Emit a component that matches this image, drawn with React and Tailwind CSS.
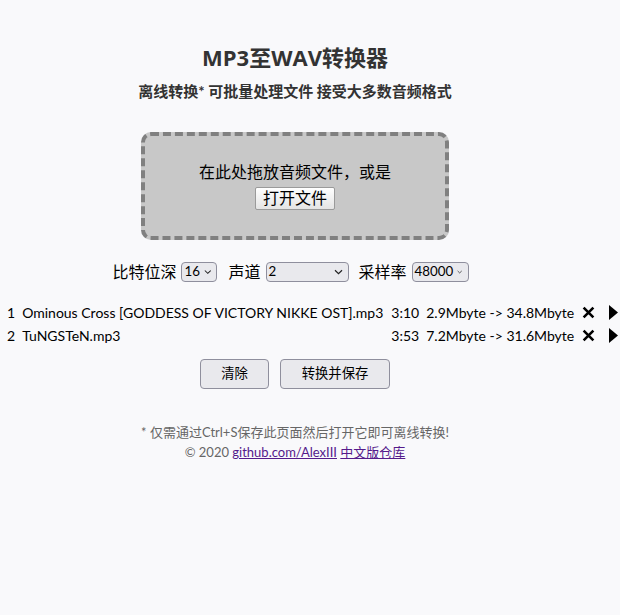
import React from "react";

const SANS = { fontFamily: "Lato, 'Noto Sans CJK SC', sans-serif" };

function Select({ value, w }) {
  return (
    <div
      className={`flex items-center justify-between h-[20px] rounded-[4px] border border-[#8f8f9d] bg-[#e9e9ed] pl-[2px] pr-[5px] text-[13.33px] text-black ${w}`}
    >
      <span className="leading-none">{value}</span>
      <svg width="9" height="6" viewBox="0 0 9 6" className="ml-[4px]">
        <path d="M1 1.2 L4.5 4.6 L8 1.2" fill="none" stroke="#222" strokeWidth="1.2" />
      </svg>
    </div>
  );
}

function Row({ idx, name, dur, size }) {
  return (
    <>
      <div className="pl-[7px] pr-[7px]">{idx}</div>
      <div className="whitespace-nowrap">{name}</div>
      <div className="pl-[8px] pr-[7px] whitespace-nowrap">{dur}</div>
      <div className="pr-[7px] whitespace-nowrap">{size}</div>
      <div className="flex items-center justify-center w-[14px]">
        <svg width="13" height="13" viewBox="0 0 12 12">
          <path d="M1.5 1.5 L10.5 10.5 M10.5 1.5 L1.5 10.5" stroke="#000" strokeWidth="2.4" />
        </svg>
      </div>
      <div className="flex items-center justify-end pr-[2px] pl-[4px]">
        <svg width="9" height="15" viewBox="0 0 9 15">
          <path d="M0 0 L9 7.5 L0 15 Z" fill="#000" />
        </svg>
      </div>
    </>
  );
}

export default function App() {
  return (
    <div className="w-[620px] min-h-[615px] bg-[#f9f9fb] text-[#222]" style={SANS}>
      <div className="w-[590px] flex flex-col items-center pt-[40px]">
        <h1
          className="text-[22px] font-bold text-[#333] leading-[34px]"
          style={{ fontFamily: "'Open Sans', 'Noto Sans CJK SC', sans-serif" }}
        >
          MP3至WAV转换器
        </h1>
        <div className="mt-[6px] text-[15px] font-bold text-[#333] leading-[22px]">
          离线转换* 可批量处理文件 接受大多数音频格式
        </div>
        <div className="mt-[30px] w-[308px] h-[108px] rounded-[10px] border-[4px] border-dashed border-[#808080] bg-[#c8c8c8] flex flex-col items-center justify-center text-[16px] text-black">
          <div className="leading-[22px] mt-[-2px]">在此处拖放音频文件，或是</div>
          <button className="mt-[4px] h-[23px] px-[7px] border border-[#9a9a9a] rounded-[2px] bg-gradient-to-b from-[#ffffff] to-[#e4e4e4] text-[16px] leading-[20px] text-black">
            打开文件
          </button>
        </div>
        <div className="mt-[20px] flex items-center text-[16px] text-black pr-[9px]">
          <span>比特位深</span>
          <span className="ml-[5px]"><Select value="16" w="w-[36px]" /></span>
          <span className="ml-[11px]">声道</span>
          <span className="ml-[5px]"><Select value="2" w="w-[83px]" /></span>
          <span className="ml-[10px]">采样率</span>
          <span className="ml-[5px]"><Select value="48000" w="w-[57px]" /></span>
        </div>
      </div>
      <div className="mt-[17px] grid grid-cols-[auto_auto_auto_auto_auto_1fr] items-center text-[14px] text-black leading-[23px]">
        <Row idx="1" name="Ominous Cross [GODDESS OF VICTORY NIKKE OST].mp3" dur="3:10" size="2.9Mbyte -> 34.8Mbyte" />
        <Row idx="2" name="TuNGSTeN.mp3" dur="3:53" size="7.2Mbyte -> 31.6Mbyte" />
      </div>
      <div className="w-[590px] flex justify-center gap-[11px] mt-[12px]">
        <button className="w-[69px] h-[30px] rounded-[4px] border border-[#8f8f9d] bg-[#e9e9ed] text-[13.33px] text-black">
          清除
        </button>
        <button className="w-[110px] h-[30px] rounded-[4px] border border-[#8f8f9d] bg-[#e9e9ed] text-[13.33px] text-black">
          转换并保存
        </button>
      </div>
      <div className="w-[590px] flex flex-col items-center mt-[33px] text-[13px] text-[#666] leading-[20px]">
        <div>* 仅需通过Ctrl+S保存此页面然后打开它即可离线转换!</div>
        <div>
          © 2020 <a className="underline text-[#551a8b]" href="#">github.com/AlexIII</a>{" "}
          <a className="underline text-[#551a8b]" href="#">中文版仓库</a>
        </div>
      </div>
    </div>
  );
}
